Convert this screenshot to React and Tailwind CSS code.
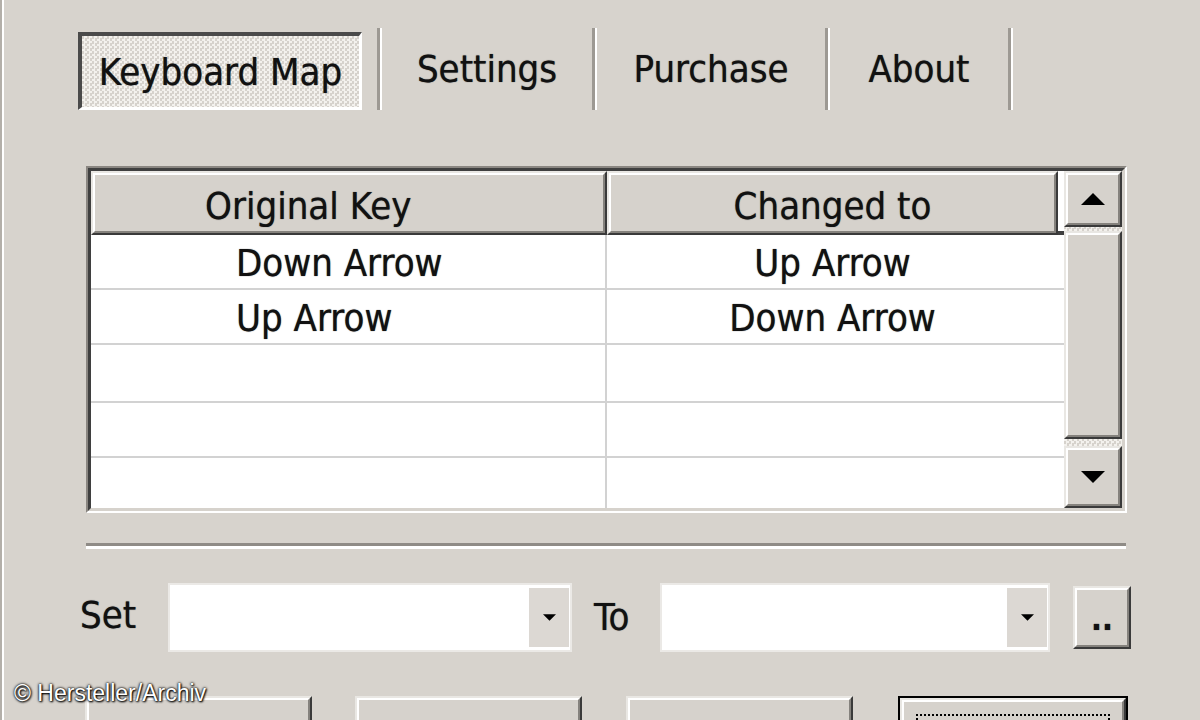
import React from "react";

const dither =
  "bg-[image:repeating-conic-gradient(#f3f1ed_0_25%,#d6d2cc_0_50%)] bg-[length:5px_5px]";

function Raised({ className = "", innerClass = "", children }) {
  return (
    <div
      className={`border-2 border-t-[#e9e7e3] border-l-[#e9e7e3] border-r-[#3a3a3a] border-b-[#3a3a3a] ${className}`}
    >
      <div
        className={`flex h-full w-full items-center justify-center border-2 border-t-white border-l-white border-r-[#85827d] border-b-[#85827d] bg-[#d6d2cc] ${innerClass}`}
      >
        {children}
      </div>
    </div>
  );
}

function TabSep() {
  return <div className="h-full w-[5px] border-l-[3px] border-[#9d9993] border-r-2 border-r-white" />;
}

function Tri({ up, w = 24, h = 12 }) {
  return (
    <svg width={w} height={h} viewBox="0 0 24 12">
      <polygon points={up ? "12,0 24,12 0,12" : "0,0 24,0 12,12"} fill="#000" />
    </svg>
  );
}

function Combo({ width }) {
  return (
    <div className={`flex h-[69px] ${width} border-2 border-[#ebe9e6] bg-white`}>
      <div className="flex-1" />
      <div className="my-[3px] mr-[1px] flex w-[40px] items-center justify-center bg-[#dcd8d3]">
        <Tri w={13} h={7} />
      </div>
    </div>
  );
}

const rows = [
  { from: "Down Arrow", to: "Up Arrow", h: "h-[55px]" },
  { from: "Up Arrow", to: "Down Arrow", h: "h-[55px]" },
  { from: "", to: "", h: "h-[58px]" },
  { from: "", to: "", h: "h-[55px]" },
];

export default function App() {
  return (
    <div className="relative h-[720px] w-[1200px] overflow-hidden border-l-2 border-[#b3afa9] bg-[#d7d3cd] font-['DejaVu_Sans_Condensed','DejaVu_Sans',sans-serif] font-stretch-condensed text-[38px] leading-none text-[#111] [text-shadow:0_0_1px_#444]">
      <div className="h-full border-l-2 border-white pl-[74px] pt-[28px]">
        {/* tabs */}
        <div className="flex h-[82px] items-stretch">
          <div
            className={`mt-[4px] flex w-[284px] items-center justify-center border-t-4 border-l-4 border-[#4a4a4a] border-r-[3px] border-b-[3px] border-r-white border-b-white ${dither}`}
          >
            Keyboard Map
          </div>
          <div className="w-[15px]" />
          <TabSep />
          <div className="flex w-[210px] items-center justify-center">Settings</div>
          <TabSep />
          <div className="flex w-[228px] items-center justify-center">Purchase</div>
          <TabSep />
          <div className="flex w-[178px] items-center justify-center">About</div>
          <TabSep />
        </div>

        {/* list view */}
        <div className="ml-[8px] mt-[56px] h-[347px] w-[1041px] border-2 border-t-[#8a8681] border-l-[#8a8681] border-r-white border-b-white">
          <div className="flex h-full border-[3px] border-t-[#3f3f3f] border-l-[#3f3f3f] border-r-[#d6d2cc] border-b-[#d6d2cc] bg-white">
            <div className="flex w-[973px] flex-col">
              <div className="flex h-[64px]">
                <Raised className="w-[516px]" innerClass="!justify-start pl-[110px] pt-[6px]">
                  Original Key
                </Raised>
                <Raised className="w-[451px]" innerClass="pt-[6px]">
                  Changed to
                </Raised>
                <div className="flex-1 border-b-4 border-[#3f3f3f]" />
              </div>
              {rows.map((r, i) => (
                <div key={i} className={`flex ${r.h} border-b-2 border-[#d2d2d2]`}>
                  <div className="flex w-[516px] items-center border-r-2 border-[#d2d2d2] pl-[145px] pt-[3px]">
                    {r.from}
                  </div>
                  <div className="flex w-[451px] items-center justify-center pt-[3px]">{r.to}</div>
                </div>
              ))}
              <div className="flex flex-1">
                <div className="w-[516px] border-r-2 border-[#d2d2d2]" />
              </div>
            </div>
            <div className={`flex flex-1 flex-col ${dither}`}>
              <Raised className="h-[56px]">
                <Tri up />
              </Raised>
              <Raised className="mt-[4px] h-[208px]" />
              <div className="flex-1" />
              <Raised className="h-[62px]">
                <Tri />
              </Raised>
            </div>
          </div>
        </div>

        {/* separator */}
        <div className="ml-[8px] mt-[30px] w-[1040px] border-t-[3px] border-b-[3px] border-t-[#8f8b86] border-b-white" />

        {/* set / to row */}
        <div className="mt-[34px] flex h-[69px] items-center">
          <div className="ml-[2px] w-[88px] pb-[6px]">Set</div>
          <Combo width="w-[404px]" />
          <div className="ml-[22px] w-[66px] pb-[2px]">To</div>
          <Combo width="w-[390px]" />
          <Raised className="ml-[23px] h-[63px] w-[58px]" innerClass="!items-end pb-[10px] text-[32px] font-bold">
            ..
          </Raised>
        </div>

        {/* bottom buttons */}
        <div className="mt-[44px] flex">
          <Raised className="ml-[7px] h-[60px] w-[227px]" />
          <Raised className="ml-[43px] h-[60px] w-[227px]" />
          <Raised className="ml-[44px] h-[60px] w-[227px]" />
          <div className="ml-[45px] h-[60px] w-[230px] border-2 border-black">
            <Raised className="h-full w-full" innerClass="!items-start p-[12px]">
              <div className="h-[30px] w-full border-2 border-dotted border-black" />
            </Raised>
          </div>
        </div>
      </div>

      <div className="absolute left-[12px] top-[682px] font-['Liberation_Sans',Arial,sans-serif] font-stretch-normal text-[23px] text-white [text-shadow:0_0_2px_#000,1px_1px_2px_#000,0_0_3px_#222]">
        © Hersteller/Archiv
      </div>
    </div>
  );
}
